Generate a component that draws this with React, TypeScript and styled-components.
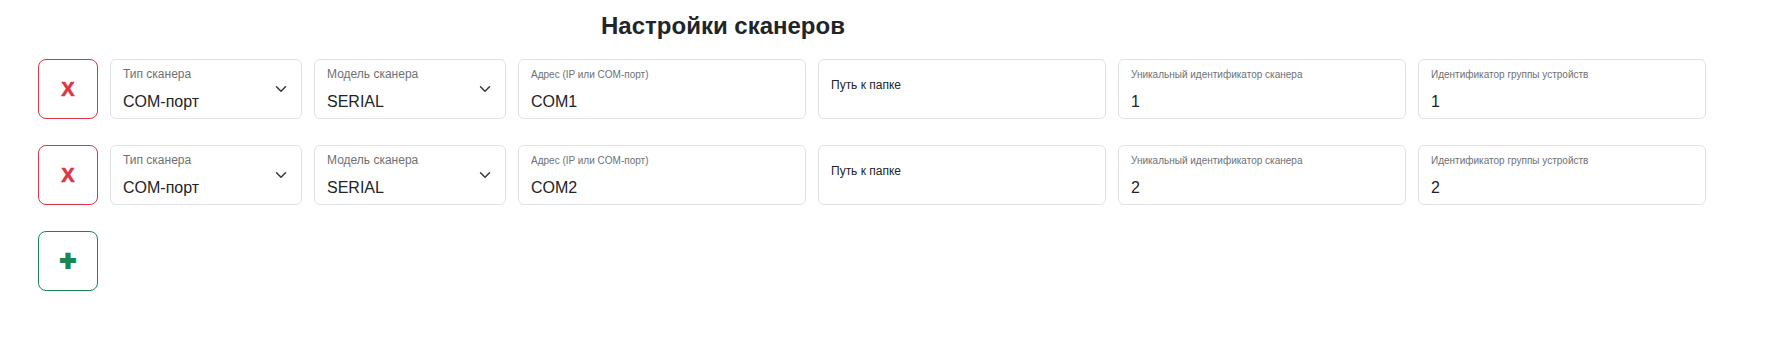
import React from "react";
import styled, { createGlobalStyle } from "styled-components";

type Scanner = {
    type: string;
    model: string;
    address: string;
    uid: string;
    group: string;
};

const scanners: Scanner[] = [
    { type: "COM-порт", model: "SERIAL", address: "COM1", uid: "1", group: "1" },
    { type: "COM-порт", model: "SERIAL", address: "COM2", uid: "2", group: "2" },
];

function Chevron() {
    return (
        <ChevronIcon viewBox='0 0 16 16' aria-hidden>
            <path
                d='m2 5 6 6 6-6'
                fill='none'
                stroke='#343a40'
                strokeWidth='2'
                strokeLinecap='round'
                strokeLinejoin='round'
            />
        </ChevronIcon>
    );
}

export default function App() {
    return (
        <>
            <GlobalStyle />
            <Page>
                <Title>Настройки сканеров</Title>
                <List>
                    {scanners.map((s, i) => (
                        <Row key={i}>
                            <IconButton $tone='#dc3545'>X</IconButton>
                            <Field>
                                <FieldBody>
                                    <FieldLabel>Тип сканера</FieldLabel>
                                    <FieldValue>{s.type}</FieldValue>
                                </FieldBody>
                                <Chevron />
                            </Field>
                            <Field>
                                <FieldBody>
                                    <FieldLabel>Модель сканера</FieldLabel>
                                    <FieldValue>{s.model}</FieldValue>
                                </FieldBody>
                                <Chevron />
                            </Field>
                            <Field>
                                <FieldBody>
                                    <FieldLabel $small>Адрес (IP или COM-порт)</FieldLabel>
                                    <FieldValue>{s.address}</FieldValue>
                                </FieldBody>
                            </Field>
                            <Field>
                                <FieldBody>
                                    <Placeholder>Путь к папке</Placeholder>
                                </FieldBody>
                            </Field>
                            <Field>
                                <FieldBody>
                                    <FieldLabel $small>Уникальный идентификатор сканера</FieldLabel>
                                    <FieldValue>{s.uid}</FieldValue>
                                </FieldBody>
                            </Field>
                            <Field>
                                <FieldBody>
                                    <FieldLabel $small>Идентификатор группы устройств</FieldLabel>
                                    <FieldValue>{s.group}</FieldValue>
                                </FieldBody>
                            </Field>
                        </Row>
                    ))}
                    <Row>
                        <IconButton $tone='#198754' $plus>+</IconButton>
                    </Row>
                </List>
            </Page>
        </>
    );
}

const GlobalStyle = createGlobalStyle`
    * {
        box-sizing: border-box;
    }
    body {
        margin: 0;
        background: #fff;
        color: #212529;
        font-family: "Liberation Sans", Arial, sans-serif;
    }
`;

const Page = styled.div`
    display: flex;
    flex-direction: column;
    padding-top: 11px;
`;

const Title = styled.h1`
    width: 1446px;
    margin: 0;
    font-size: 24px;
    line-height: 29px;
    font-weight: 700;
    text-align: center;
    color: #212529;
`;

const List = styled.div`
    display: flex;
    flex-direction: column;
    gap: 26px;
    margin-top: 19px;
    padding-left: 38px;
`;

const Row = styled.div`
    display: grid;
    grid-template-columns: 60px repeat(2, 192px) repeat(4, 288px);
    column-gap: 12px;
    height: 60px;
`;

const IconButton = styled.button<{ $tone: string; $plus?: boolean }>`
    display: flex;
    align-items: center;
    justify-content: center;
    width: 60px;
    height: 60px;
    padding: 0;
    border: 1px solid ${(p) => p.$tone};
    border-radius: 8px;
    background: #fff;
    color: ${(p) => p.$tone};
    font-family: "Liberation Sans", Arial, sans-serif;
    font-weight: 700;
    font-size: ${(p) => (p.$plus ? "28px" : "20px")};
    line-height: ${(p) => (p.$plus ? "32px" : "24px")};
    -webkit-text-stroke: ${(p) => (p.$plus ? "2px" : "0.6px")} ${(p) => p.$tone};
    cursor: pointer;
`;

const Field = styled.div`
    display: flex;
    align-items: center;
    height: 60px;
    border: 1px solid #dee2e6;
    border-radius: 6px;
    background: #fff;
`;

const FieldBody = styled.div`
    display: flex;
    flex-direction: column;
    align-self: stretch;
    flex: 1;
    min-width: 0;
    padding: 7px 12px 0 12px;
`;

const FieldLabel = styled.div<{ $small?: boolean }>`
    height: 14px;
    font-size: ${(p) => (p.$small ? "10px" : "12px")};
    line-height: ${(p) => (p.$small ? "13px" : "14px")};
    padding-top: ${(p) => (p.$small ? "1px" : "0")};
    color: #6e7174;
    white-space: nowrap;
`;

const FieldValue = styled.div`
    margin-top: 11px;
    font-size: 16px;
    line-height: 20px;
    color: #212529;
`;

const Placeholder = styled.div`
    padding-top: 11px;
    font-size: 12px;
    line-height: 14px;
    color: #212529;
`;

const ChevronIcon = styled.svg`
    flex: none;
    width: 12px;
    height: 12px;
    margin-right: 14px;
`;
